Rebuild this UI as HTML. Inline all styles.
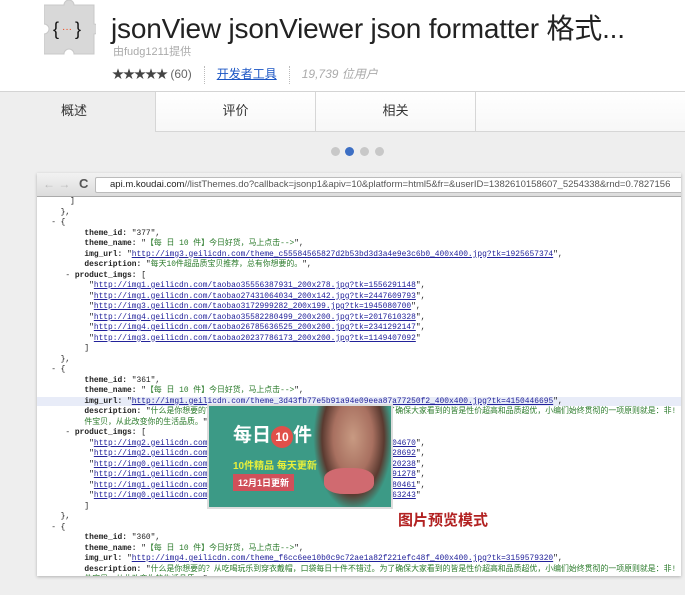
<!DOCTYPE html>
<html><head><meta charset="utf-8"><style>
*{margin:0;padding:0;box-sizing:border-box}
body{width:685px;height:595px;overflow:hidden;background:#eeeeee;font-family:"Liberation Sans","Noto Sans CJK SC",sans-serif;position:relative}
.hdr{position:absolute;left:0;top:0;width:685px;height:92px;background:#fff;border-bottom:1px solid #d4d4d4}
.title{position:absolute;left:111px;top:7px;font-size:28px;color:#222;white-space:nowrap;letter-spacing:-0.2px}
.by{position:absolute;left:113px;top:43px;font-size:11px;color:#aaa}
.meta{position:absolute;left:112px;top:65px;font-size:12px;color:#555;white-space:nowrap}
.tabs{position:absolute;left:0;top:92px;width:685px;height:40px;background:#fff}
.tab{position:absolute;top:0;height:40px;border-right:1px solid #d6d6d6;border-bottom:1px solid #d6d6d6;font-size:13px;color:#333;text-align:center;line-height:38px;background:linear-gradient(#fff,#f7f7f7)}
.dot{position:absolute;top:147px;width:9px;height:9px;border-radius:50%;background:#c8c8c8}
.shot{position:absolute;left:37px;top:173px;width:644px;height:403px;background:#fff;box-shadow:0 1px 3px rgba(0,0,0,.25);overflow:hidden}
.bar{position:absolute;left:0;top:0;width:644px;height:24px;background:linear-gradient(#f2f2f2,#dcdcdc);border-bottom:1px solid #aaa}
.url{position:absolute;left:58px;top:4px;width:600px;height:16px;background:#fff;border:1px solid #bbb;border-radius:2px;font-size:9.5px;line-height:14px;padding-left:14px;color:#555;white-space:nowrap}
.code{position:absolute;left:0;top:24px;font-family:"Liberation Mono","Noto Sans CJK SC",monospace;font-size:7.9px;line-height:10.5px;color:#222;white-space:pre}
.k{font-weight:bold}
.s{color:#2a7a2a}
a{color:#22229a;text-decoration:underline}
</style></head><body>
<div class="hdr">
<svg style="position:absolute;left:44px;top:0" width="52" height="56" viewBox="0 0 52 56"><path d="M0 5H20a5 5 0 1 1 10 0H50V24a5 5 0 1 1 0 10V54H30a5 5 0 1 0 -10 0H0V34a5 5 0 1 0 0 -10Z" fill="#d8d8d8" stroke="#c8c8c8"/><text x="9" y="35" font-size="18" font-family="Liberation Sans" fill="#111">{</text><text x="31" y="35" font-size="18" font-family="Liberation Sans" fill="#111">}</text><text x="18" y="32" font-size="10" fill="#f04010" font-family="Liberation Sans">···</text></svg>
<div class="title">jsonView jsonViewer json formatter 格式...</div>
<div class="by">由fudg1211提供</div>
<div class="meta"><span style="color:#444;letter-spacing:-1px">★★★★★</span> <span style="color:#666">(60)</span><span style="display:inline-block;width:1px;height:18px;border-left:1px dotted #bbb;margin:0 12px;vertical-align:middle"></span><span style="color:#1a55c4;text-decoration:underline">开发者工具</span><span style="display:inline-block;width:1px;height:18px;border-left:1px dotted #bbb;margin:0 12px;vertical-align:middle"></span><i style="color:#aaa">19,739 位用户</i></div>
</div>
<div class="tabs">
<div class="tab" style="left:0;width:156px;background:#eeeeee;border-bottom:none;text-align:left;padding-left:61px">概述</div>
<div class="tab" style="left:156px;width:160px">评价</div>
<div class="tab" style="left:316px;width:160px">相关</div>
<div class="tab" style="left:476px;width:209px;border-right:none"></div>
</div>
<div class="dot" style="left:331px"></div><div class="dot" style="left:345px;background:#3d6fc4"></div><div class="dot" style="left:360px"></div><div class="dot" style="left:375px"></div>
<div class="shot">
<div class="bar"><span style="position:absolute;left:6px;top:4px;font-size:12px;color:#bbb">← →</span><span style="position:absolute;left:42px;top:3px;font-size:13px;font-weight:bold;color:#555">C</span>
<div class="url"><span style="color:#222">api.m.koudai.com</span>//listThemes.do?callback=jsonp1&amp;apiv=10&amp;platform=html5&amp;fr=&amp;userID=1382610158607_5254338&amp;rnd=0.7827156</div></div>
<div class="code">       ]
     },
   - {
          <span class="k">theme_id:</span> "377",
          <span class="k">theme_name:</span> "<span class="s">【每 日 10 件】今日好货，马上点击--></span>",
          <span class="k">img_url:</span> "<a>http://img3.geilicdn.com/theme_c55584565827d2b53bd3d3a4e9e3c6b0_400x400.jpg?tk=1925657374</a>",
          <span class="k">description:</span> "<span class="s">每天10件超品质宝贝推荐，总有你想要的。</span>",
      - <span class="k">product_imgs:</span> [
           "<a>http://img1.geilicdn.com/taobao35556387931_200x278.jpg?tk=1556291148</a>",
           "<a>http://img1.geilicdn.com/taobao27431064034_200x142.jpg?tk=2447609793</a>",
           "<a>http://img3.geilicdn.com/taobao3172999282_200x199.jpg?tk=1945080700</a>",
           "<a>http://img4.geilicdn.com/taobao35582280499_200x200.jpg?tk=2017610328</a>",
           "<a>http://img4.geilicdn.com/taobao26785636525_200x200.jpg?tk=2341292147</a>",
           "<a>http://img3.geilicdn.com/taobao20237786173_200x200.jpg?tk=1149407092</a>"
          ]
     },
   - {
          <span class="k">theme_id:</span> "361",
          <span class="k">theme_name:</span> "<span class="s">【每 日 10 件】今日好货，马上点击--></span>",
<span style="background:#e8ecf8">      </span><span style="background:#e8ecf8">    <span class="k">img_url:</span> "<a>http://img1.geilicdn.com/theme_3d43fb77e5b91a94e09eea87a77250f2_400x400.jpg?tk=4150446695</a>",                              </span>
          <span class="k">description:</span> "<span class="s">什么是你想要的？从吃喝玩乐到穿衣戴帽，口袋每日十件不错过。为了确保大家看到的皆是性价超高和品质超优，小编们始终贯彻的一项原则就是：非!</span>
          <span class="s">件宝贝，从此改变你的生活品质。</span>",
      - <span class="k">product_imgs:</span> [
           "<a>http://img2.geilicdn.com/taobao00000000000_200x200.jpg?tk=1251604670</a>",
           "<a>http://img2.geilicdn.com/taobao00000000000_200x200.jpg?tk=3018428692</a>",
           "<a>http://img0.geilicdn.com/taobao00000000000_200x200.jpg?tk=3418820238</a>",
           "<a>http://img1.geilicdn.com/taobao00000000000_200x200.jpg?tk=2739491278</a>",
           "<a>http://img1.geilicdn.com/taobao00000000000_200x200.jpg?tk=1850780461</a>",
           "<a>http://img0.geilicdn.com/taobao00000000000_200x200.jpg?tk=2081963243</a>"
          ]
     },
   - {
          <span class="k">theme_id:</span> "360",
          <span class="k">theme_name:</span> "<span class="s">【每 日 10 件】今日好货，马上点击--></span>",
          <span class="k">img_url:</span> "<a>http://img4.geilicdn.com/theme_f6cc6ee10b0c9c72ae1a82f221efc48f_400x400.jpg?tk=3159579320</a>",
          <span class="k">description:</span> "<span class="s">什么是你想要的？从吃喝玩乐到穿衣戴帽，口袋每日十件不错过。为了确保大家看到的皆是性价超高和品质超优，小编们始终贯彻的一项原则就是：非!</span>
          <span class="s">件宝贝，从此改变你的生活品质。</span>",</div>
<div style="position:absolute;left:170px;top:231px;width:186px;height:105px;background:#3c9a86;border:2px solid #ddd;overflow:hidden">
<div style="position:absolute;left:24px;top:14px;color:#fff;font-size:19px;font-weight:bold">每日<span style="display:inline-block;width:22px;height:22px;border-radius:50%;background:#e0504a;font-size:12px;text-align:center;line-height:22px">10</span>件</div>
<div style="position:absolute;left:24px;top:51px;color:#e8f03a;font-size:10px;font-weight:bold">10件精品 每天更新</div>
<div style="position:absolute;left:24px;top:68px;background:#d0505a;color:#fff;font-size:9px;font-weight:bold;padding:2px 5px">12月1日更新</div>
<div style="position:absolute;left:104px;top:0;width:80px;height:105px;background:radial-gradient(ellipse at 50% 30%,#c89a82 0,#a87060 35%,#5a3a30 55%,transparent 70%)"></div>
<div style="position:absolute;left:115px;top:62px;width:50px;height:26px;background:#d06a70;border-radius:40%"></div>
</div>
<div style="position:absolute;left:361px;top:336px;font-size:15px;font-weight:bold;color:#b22222">图片预览模式</div>
</div>
</body></html>
